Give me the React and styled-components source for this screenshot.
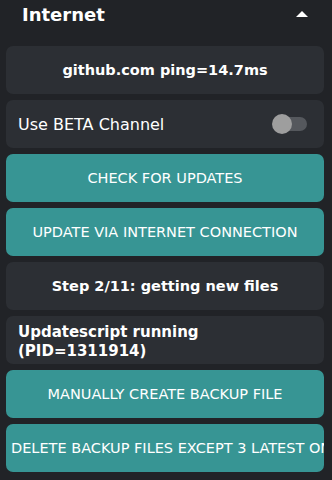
import React from 'react';
import styled, { createGlobalStyle } from 'styled-components';

const GlobalStyle = createGlobalStyle`
  body {
    margin: 0;
    background: #212327;
    font-family: "DejaVu Sans", "Open Sans", sans-serif;
    color: #ffffff;
  }
`;

const Panel = styled.div`
  width: 332px;
  height: 480px;
  padding: 0 8px 0 6px;
  box-sizing: border-box;
  overflow: hidden;
`;

const Header = styled.div`
  height: 40px;
  box-sizing: border-box;
  margin-bottom: 6px;
  padding: 0 16px 12px 16px;
  display: flex;
  align-items: center;
  justify-content: space-between;
`;

const Title = styled.h2`
  margin: 0;
  font-size: 18px;
  font-weight: 700;
`;

const Caret = styled.span`
  width: 0;
  height: 0;
  border-left: 6px solid transparent;
  border-right: 6px solid transparent;
  border-bottom: 6px solid #ffffff;
`;

const List = styled.div`
  display: flex;
  flex-direction: column;
  gap: 6px;
`;

const Card = styled.div`
  height: 48px;
  box-sizing: border-box;
  border-radius: 7px;
  background: #2c2f34;
  display: flex;
  align-items: ${(p) => (p.$top ? 'flex-start' : 'center')};
  justify-content: ${(p) => (p.$left ? 'space-between' : 'center')};
  padding: ${(p) => (p.$top ? '7px 12px' : '0 12px')};
  overflow: hidden;
  font-size: ${(p) => (p.$top ? '15px' : p.$bold ? '14.5px' : '16px')};
  font-weight: ${(p) => (p.$bold ? 700 : 400)};
  line-height: 19px;
`;

const Button = styled.button`
  height: 48px;
  border: none;
  border-radius: 7px;
  background: #379594;
  color: #ffffff;
  font-family: inherit;
  font-size: 14.5px;
  font-weight: 500;
  text-transform: uppercase;
  white-space: nowrap;
  overflow: hidden;
  padding: 0 5px;
  text-align: center;
`;

const Switch = styled.span`
  position: relative;
  flex: none;
  width: 31px;
  height: 14px;
  margin-right: 5px;
  border-radius: 7px;
  background: #55585d;
`;

const Knob = styled.span`
  position: absolute;
  left: -4px;
  top: -3px;
  width: 20px;
  height: 20px;
  border-radius: 50%;
  background: #9e9e9e;
`;

export default function App() {
  return (
    <Panel>
      <GlobalStyle />
      <Header>
        <Title>Internet</Title>
        <Caret />
      </Header>
      <List>
        <Card $bold>github.com ping=14.7ms</Card>
        <Card $left>
          <span>Use BETA Channel</span>
          <Switch>
            <Knob />
          </Switch>
        </Card>
        <Button>Check for updates</Button>
        <Button>Update via internet connection</Button>
        <Card $bold>Step 2/11: getting new files</Card>
        <Card $bold $top $left>Updatescript running (PID=1311914)</Card>
        <Button>Manually create backup file</Button>
        <Button>Delete backup files except 3 latest ones</Button>
      </List>
    </Panel>
  );
}
